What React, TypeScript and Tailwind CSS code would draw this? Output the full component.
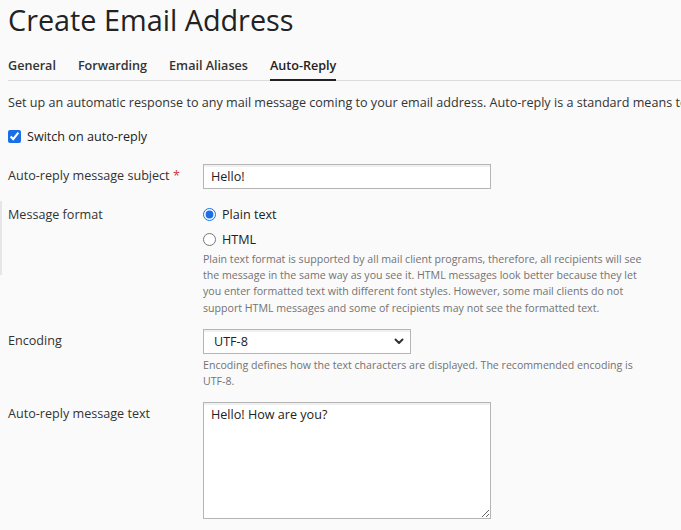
import React from "react";

export default function App() {
  const font = { fontFamily: '"Open Sans", "Noto Sans", sans-serif' };
  return (
    <div className="min-h-[530px] w-[681px] overflow-hidden bg-[#fafafa] text-[#222] text-[12.6px]" style={font}>
      <h1 className="pl-2 pt-[1px] text-[28.8px] leading-[38px] font-normal text-[#222]">Create Email Address</h1>
      <div className="ml-2 mt-[17px] flex gap-[22px] border-b border-[#dcdcdc] text-[12.6px] font-semibold text-[#333]">
        <div className="pb-[4px] pt-[1px]">General</div>
        <div className="pb-[4px] pt-[1px]">Forwarding</div>
        <div className="pb-[4px] pt-[1px]">Email Aliases</div>
        <div className="-mb-[1px] border-b-2 border-[#222] pb-[3px] pt-[1px] text-[#222]">Auto-Reply</div>
      </div>
      <p className="mt-[12px] whitespace-nowrap pl-2 leading-[20px] text-[#333]">
        Set up an automatic response to any mail message coming to your email address. Auto-reply is a standard means to inform senders that you are away.
      </p>
      <label className="mt-[14px] flex items-center gap-[6px] pl-2 leading-[20px] text-[#222]">
        <input type="checkbox" defaultChecked className="m-0 h-[13px] w-[13px] accent-[#1a6ee8]" />
        <span>Switch on auto-reply</span>
      </label>

      <div className="mt-[17px] flex items-center">
        <div className="w-[203px] pl-2 text-[#333]">
          Auto-reply message subject <span className="text-[#d0343c]">*</span>
        </div>
        <input
          defaultValue="Hello!"
          className="h-[25px] w-[288px] border border-[#b5b5b5] bg-white px-[7px] text-[12.6px] text-[#222] shadow-[inset_0_2px_0_rgba(0,0,0,0.06)] outline-none"
          style={font}
        />
      </div>

      <div className="mt-[12px] flex items-start">
        <div className="h-[74px] w-[203px] border-l-2 border-[#e6e6e6] pl-[6px] pt-[4px] leading-[20px] text-[#333]">Message format</div>
        <div className="flex-1">
          <label className="mt-[4px] flex items-center gap-[6px] leading-[20px]">
            <input type="radio" name="fmt" defaultChecked className="m-0 h-[13px] w-[13px] accent-[#1a6ee8]" />
            <span className="text-[#222]">Plain text</span>
          </label>
          <label className="mt-[5px] flex items-center gap-[6px] leading-[20px]">
            <input type="radio" name="fmt" className="m-0 h-[13px] w-[13px] accent-[#1a6ee8]" />
            <span className="text-[#222]">HTML</span>
          </label>
          <p className="mt-[1px] w-[450px] text-[10.6px] leading-[16.3px] text-[#737373]">
            Plain text format is supported by all mail client programs, therefore, all recipients will see the message in the same way as you see it. HTML messages look better because they let you enter formatted text with different font styles. However, some mail clients do not support HTML messages and some of recipients may not see the formatted text.
          </p>
        </div>
      </div>

      <div className="mt-[13px] flex">
        <div className="w-[203px] pl-2 pt-[2px] leading-[20px] text-[#333]">Encoding</div>
        <div>
          <div className="relative h-[25px] w-[208px] border border-[#b5b5b5] bg-white shadow-[inset_0_2px_0_rgba(0,0,0,0.06)]">
            <span className="absolute left-[10px] top-[3px] text-[12.6px] text-[#222]">UTF-8</span>
            <svg className="absolute right-[6px] top-[8px]" width="10" height="7" viewBox="0 0 10 7">
              <path d="M1.5 1.5 L5 5 L8.5 1.5" fill="none" stroke="#333" strokeWidth="2" strokeLinecap="round" strokeLinejoin="round" />
            </svg>
          </div>
          <p className="mt-[3px] w-[446px] text-[10.6px] leading-[16.3px] text-[#737373]">
            Encoding defines how the text characters are displayed. The recommended encoding is UTF-8.
          </p>
        </div>
      </div>

      <div className="mt-[12px] flex">
        <div className="w-[203px] pl-2 pt-[2px] leading-[20px] text-[#333]">Auto-reply message text</div>
        <textarea
          defaultValue="Hello! How are you?"
          className="h-[117px] w-[288px] resize border border-[#b5b5b5] bg-white px-[7px] py-[3px] text-[12.6px] text-[#222] shadow-[inset_0_2px_0_rgba(0,0,0,0.06)] outline-none"
          style={font}
        />
      </div>
    </div>
  );
}
